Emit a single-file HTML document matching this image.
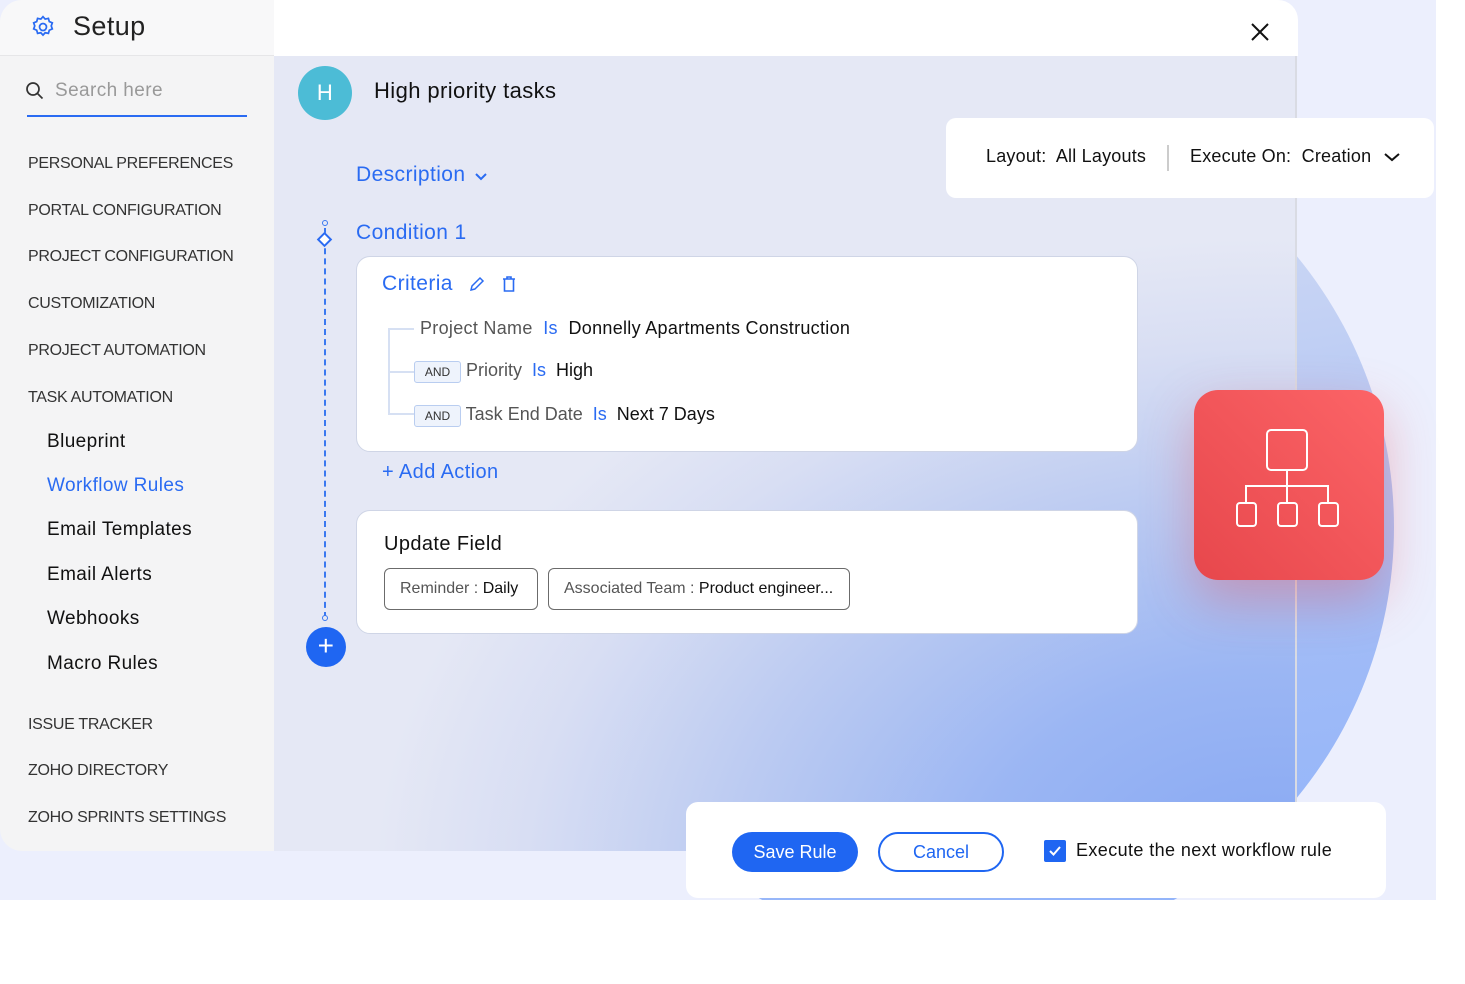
<!DOCTYPE html>
<html><head><meta charset="utf-8"><style>
*{margin:0;padding:0;box-sizing:border-box}
body{width:1465px;height:984px;background:#fff;font-family:"Liberation Sans",sans-serif;position:relative;overflow:hidden;line-height:1.3;letter-spacing:.4px}
.abs{position:absolute;white-space:nowrap}
.bg{left:0;top:0;width:1436px;height:900px;background:#eceffd;overflow:hidden}
.circle{left:542px;top:101px;width:852px;height:852px;border-radius:50%;background:linear-gradient(170deg,#dde3f6 0%,#c3d1f4 35%,#a2bcf6 65%,#8eb2fc 100%)}
.side{left:0;top:0;width:274px;height:851px;background:#f4f4f5;border-radius:22px 0 0 22px}
.sidehead{left:0;top:0;width:274px;height:56px;background:#f8f8f9;border-bottom:1px solid #e6e6e8;border-radius:22px 0 0 0}
.main{left:274px;top:56px;width:1023px;height:795px;background:radial-gradient(ellipse 1000px 720px at 1000px 830px,#86a7f3 0%,#9bb6f3 30%,#bccbf2 55%,#d8def3 75%,#e5e8f5 90%);border-right:2px solid #d9dbe3}
.mainhead{left:274px;top:0;width:1024px;height:56px;background:#fff;border-radius:0 20px 0 0}
.cat{left:28px;font-size:16px;color:#333;letter-spacing:-.3px}
.sub{left:47px;font-size:19px;color:#111}
.card{background:#fff;border:1px solid #cfd5e6;border-radius:14px}
.and{display:inline-block;border:1px solid #b9cdf0;background:#eef3fc;border-radius:3px;font-size:12px;color:#333;width:47px;height:22px;line-height:20px;text-align:center;letter-spacing:0}
.blue{color:#2a6bf2}
.chip{border:1px solid #6b6b6b;border-radius:6px;height:42px;line-height:40px;font-size:16px;color:#555;padding:0 15px;top:568px;letter-spacing:0}
</style></head><body>
<div class="abs bg"><div class="abs circle"></div></div>
<div class="abs side"></div>
<div class="abs sidehead"></div>
<svg class="abs" style="left:30px;top:14px" width="26" height="26" viewBox="0 0 24 24" fill="none" stroke="#2a6bf2" stroke-width="1.6"><circle cx="12" cy="12" r="3.2"/><path d="M12 2.5l2 2.2 3-.6.8 2.9 2.8 1.2-1 2.8 1 2.8-2.8 1.2-.8 2.9-3-.6-2 2.2-2-2.2-3 .6-.8-2.9-2.8-1.2 1-2.8-1-2.8 2.8-1.2.8-2.9 3 .6z"/></svg>
<div class="abs" style="left:73px;top:9px;font-size:27px;color:#222">Setup</div>
<svg class="abs" style="left:25px;top:81px" width="20" height="20" viewBox="0 0 20 20" fill="none" stroke="#333" stroke-width="1.7"><circle cx="8" cy="8" r="6"/><path d="M12.5 12.5l5 5"/></svg>
<div class="abs" style="left:55px;top:79px;font-size:19px;color:#999">Search here</div>
<div class="abs" style="left:27px;top:115px;width:220px;height:2px;background:#2a6bf2"></div>
<div class="abs cat" style="top:154px">PERSONAL PREFERENCES</div>
<div class="abs cat" style="top:201px">PORTAL CONFIGURATION</div>
<div class="abs cat" style="top:247px">PROJECT CONFIGURATION</div>
<div class="abs cat" style="top:294px">CUSTOMIZATION</div>
<div class="abs cat" style="top:341px">PROJECT AUTOMATION</div>
<div class="abs cat" style="top:388px">TASK AUTOMATION</div>
<div class="abs sub" style="top:430px">Blueprint</div>
<div class="abs sub" style="top:474px;color:#2a6bf2">Workflow Rules</div>
<div class="abs sub" style="top:518px">Email Templates</div>
<div class="abs sub" style="top:563px">Email Alerts</div>
<div class="abs sub" style="top:607px">Webhooks</div>
<div class="abs sub" style="top:652px">Macro Rules</div>
<div class="abs cat" style="top:715px">ISSUE TRACKER</div>
<div class="abs cat" style="top:761px">ZOHO DIRECTORY</div>
<div class="abs cat" style="top:808px">ZOHO SPRINTS SETTINGS</div>

<div class="abs main"></div>
<div class="abs mainhead"></div>
<svg class="abs" style="left:1250px;top:22px" width="20" height="20" viewBox="0 0 20 20" stroke="#111" stroke-width="2"><path d="M2 2l16 16M18 2L2 18"/></svg>
<div class="abs" style="left:298px;top:66px;width:54px;height:54px;border-radius:50%;background:#4cbcd6;color:#fff;font-size:22px;text-align:center;line-height:54px">H</div>
<div class="abs" style="left:374px;top:77px;font-size:22px;color:#111">High priority tasks</div>
<div class="abs blue" style="left:356px;top:161px;font-size:21px">Description</div>
<svg class="abs" style="left:474px;top:172px" width="14" height="10" viewBox="0 0 14 10" fill="none" stroke="#2a6bf2" stroke-width="2"><path d="M2 2l5 5 5-5"/></svg>
<div class="abs card" style="left:946px;top:118px;width:488px;height:80px;border:none;border-radius:10px"></div>
<div class="abs" style="left:986px;top:145px;font-size:18px;color:#111;letter-spacing:.2px">Layout:&nbsp; All Layouts</div>
<div class="abs" style="left:1167px;top:145px;width:2px;height:26px;background:#ccc"></div>
<div class="abs" style="left:1190px;top:145px;font-size:18px;color:#111;letter-spacing:.2px">Execute On:&nbsp; Creation</div>
<svg class="abs" style="left:1383px;top:151px" width="18" height="12" viewBox="0 0 18 12" fill="none" stroke="#111" stroke-width="2"><path d="M2 3l7 6 7-6"/></svg>

<div class="abs" style="left:324px;top:228px;height:390px;border-left:2px dashed #3a78f0"></div>
<div class="abs" style="left:322px;top:220px;width:6px;height:6px;border:1.5px solid #3a78f0;border-radius:50%;background:#e5e8f5"></div>
<div class="abs" style="left:319px;top:234px;width:11px;height:11px;border:2px solid #2a6bf2;background:#fff;transform:rotate(45deg)"></div>
<div class="abs" style="left:322px;top:615px;width:6px;height:6px;border:1.5px solid #3a78f0;border-radius:50%;background:#e5e8f5"></div>
<div class="abs" style="left:306px;top:627px;width:40px;height:40px;border-radius:50%;background:#1f66f2;color:#fff;text-align:center;line-height:38px;font-size:28px">+</div>
<div class="abs blue" style="left:356px;top:219px;font-size:21px">Condition 1</div>

<div class="abs card" style="left:356px;top:256px;width:782px;height:196px"></div>
<div class="abs blue" style="left:382px;top:270px;font-size:21px">Criteria</div>
<svg class="abs" style="left:468px;top:275px" width="18" height="18" viewBox="0 0 18 18" fill="none" stroke="#2a6bf2" stroke-width="1.5"><path d="M3 15l1-4 8-8 3 3-8 8zM3 15l4-1"/></svg>
<svg class="abs" style="left:501px;top:275px" width="16" height="18" viewBox="0 0 16 18" fill="none" stroke="#2a6bf2" stroke-width="1.6"><path d="M2 4h12M6 4V2h4v2M3.5 4v12h9V4"/></svg>
<div class="abs" style="left:388px;top:328px;width:2px;height:86px;background:#d6e0f3"></div>
<div class="abs" style="left:388px;top:328px;width:26px;height:2px;background:#d6e0f3"></div>
<div class="abs" style="left:388px;top:371px;width:26px;height:2px;background:#d6e0f3"></div>
<div class="abs" style="left:388px;top:413px;width:26px;height:2px;background:#d6e0f3"></div>
<div class="abs" style="left:420px;top:317px;font-size:18px;color:#555;letter-spacing:.3px">Project Name&nbsp; <span class="blue">Is</span>&nbsp; <span style="color:#111">Donnelly Apartments Construction</span></div>
<div class="abs" style="left:414px;top:359px;font-size:18px;color:#555;letter-spacing:0"><span class="and">AND</span> Priority&nbsp; <span class="blue">Is</span>&nbsp; <span style="color:#111">High</span></div>
<div class="abs" style="left:414px;top:403px;font-size:18px;color:#555;letter-spacing:0"><span class="and">AND</span> Task End Date&nbsp; <span class="blue">Is</span>&nbsp; <span style="color:#111">Next 7 Days</span></div>
<div class="abs blue" style="left:382px;top:459px;font-size:20px">+ Add Action</div>

<div class="abs card" style="left:356px;top:510px;width:782px;height:124px"></div>
<div class="abs" style="left:384px;top:531px;font-size:20px;color:#111">Update Field</div>
<div class="abs chip" style="left:384px;width:154px">Reminder : <span style="color:#111">Daily</span></div>
<div class="abs chip" style="left:548px;width:302px">Associated Team : <span style="color:#111">Product engineer...</span></div>

<div class="abs" style="left:1194px;top:390px;width:190px;height:190px;border-radius:24px;background:linear-gradient(225deg,#fc6467,#e7474c);box-shadow:0 20px 50px rgba(230,70,80,.35)"></div>
<svg class="abs" style="left:1234px;top:428px" width="108" height="102" viewBox="0 0 108 102" fill="none" stroke="#fff" stroke-width="2"><rect x="33" y="2" width="40" height="40" rx="4"/><path d="M53 42v16M12 74V58h82v16M53 58v16"/><rect x="3" y="75" width="19" height="23" rx="3"/><rect x="44" y="75" width="19" height="23" rx="3"/><rect x="85" y="75" width="19" height="23" rx="3"/></svg>

<div class="abs" style="left:686px;top:802px;width:700px;height:96px;background:#fff;border-radius:12px"></div>
<div class="abs" style="left:732px;top:832px;width:126px;height:40px;border-radius:20px;background:#1f66f2;color:#fff;font-size:18px;text-align:center;line-height:40px;letter-spacing:0">Save Rule</div>
<div class="abs" style="left:878px;top:832px;width:126px;height:40px;border-radius:20px;border:2px solid #1f66f2;color:#1f66f2;font-size:18px;text-align:center;line-height:36px;letter-spacing:0">Cancel</div>
<div class="abs" style="left:1044px;top:840px;width:22px;height:22px;background:#1f66f2;border-radius:2px"></div>
<svg class="abs" style="left:1048px;top:845px" width="14" height="12" viewBox="0 0 14 12" fill="none" stroke="#fff" stroke-width="2"><path d="M2 6l3.5 3.5L12 2"/></svg>
<div class="abs" style="left:1076px;top:839px;font-size:18px;color:#111">Execute the next workflow rule</div>
</body></html>
